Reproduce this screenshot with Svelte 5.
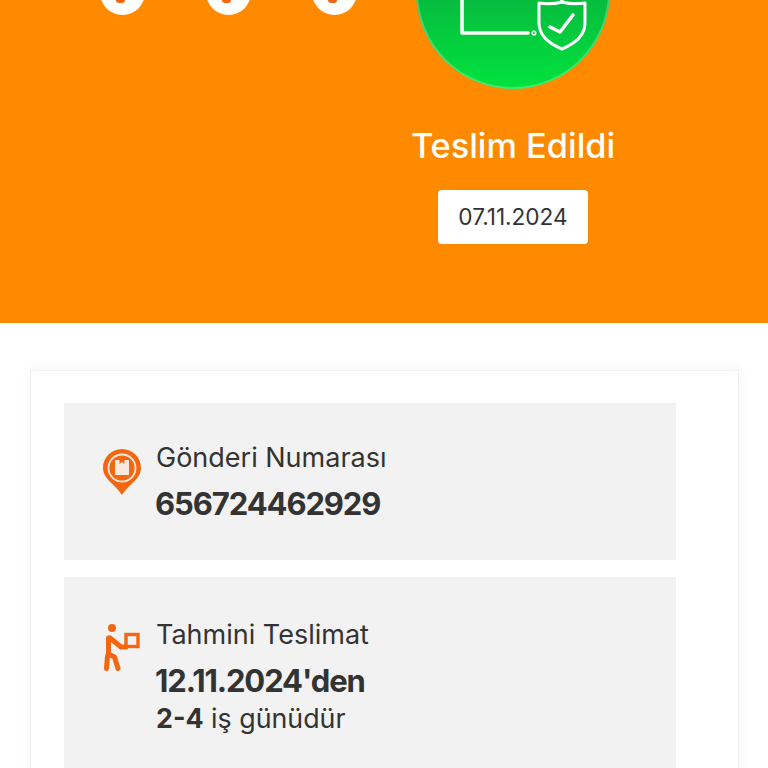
<script>
	const steps = [0, 1, 2];
	const rows = [
		{ label: 'Gönderi Numarası', value: '656724462929', icon: 'pin' },
		{ label: 'Tahmini Teslimat', value: "12.11.2024'den", icon: 'courier', note: 'iş günüdür', noteStrong: '2-4' }
	];
</script>

<main class="page">
	<section class="hero">
		<div class="steps">
			{#each steps as step (step)}
				<span class="step"><i class="step__mark"></i></span>
			{/each}
		</div>
		<div class="status">
			<div class="status__badge">
				<svg viewBox="0 0 194 194" width="194" height="194" fill="none" stroke="#fff" stroke-width="3.500" stroke-linecap="round" stroke-linejoin="round">
					<path d="M46 40v98h66" />
					<path d="M46 40h100v67" />
					<circle cx="118" cy="138" r="0.800" />
					<path d="M123 108q12 2 23 -1q11 3 23 1v20c0 13-11 21-23 26c-12-5-23-13-23-26z" stroke-width="3" />
					<path d="M134 132l10 5l13-17" />
				</svg>
			</div>
			<h1>Teslim Edildi</h1>
			<p class="status__date">07.11.2024</p>
		</div>
	</section>

	<section class="card">
		{#each rows as row (row.label)}
			<div class="row" class:row--tall={row.note}>
				<div class="row__icon">
					{#if row.icon === 'pin'}
						<svg viewBox="0 0 38 46" width="38" height="46">
							<path d="M19 0C8.500 0 0 8.300 0 19C0 30 12 35 19 46C26 35 38 30 38 19C38 8.300 29.500 0 19 0z" fill="#f4660f" />
							<circle cx="19" cy="19" r="13.500" fill="none" stroke="#f6e9df" stroke-width="1.800" />
							<path d="M12 11h4.500v4l2.500-2l2.500 2v-4h4.500v15h-14z" fill="#f6e9df" />
						</svg>
					{:else}
						<svg viewBox="0 0 36 47" width="36" height="47" fill="none" stroke="#f4660f" stroke-width="5" stroke-linecap="round" stroke-linejoin="round">
							<circle cx="8" cy="4" r="4" fill="#f4660f" stroke="none" />
							<path d="M6 14l11 9h5" />
							<path d="M4.500 14v16l6 3l3.500 11.500" />
							<path d="M3.500 32l-1 12.500" />
							<rect x="22" y="10.500" width="12" height="12" stroke-width="3.400" stroke-linecap="butt" stroke-linejoin="miter" />
						</svg>
					{/if}
				</div>
				<div class="row__text">
					<p class="row__label">{row.label}</p>
					<p class="row__value">{row.value}</p>
					{#if row.note}
						<p class="row__note"><strong>{row.noteStrong}</strong> {row.note}</p>
					{/if}
				</div>
			</div>
		{/each}
	</section>
</main>

<style>
	:global(body) {
		background: #fff;
	}

	.page {
		height: 768px;
		overflow: hidden;
		font-family: Inter, 'Noto Sans', sans-serif;
		color: #333;
	}

	.hero {
		display: flex;
		justify-content: space-between;
		height: 428px;
		margin-top: -105px;
		padding: 0 158px 0 100px;
		box-sizing: border-box;
		background: #ff8a00;
	}

	.steps {
		display: flex;
		gap: 61px;
		padding-top: 75px;
	}

	.step {
		position: relative;
		width: 45px;
		height: 45px;
		border-radius: 50%;
		background: #fff;
	}

	.step__mark {
		position: absolute;
		left: 16px;
		top: 30px;
		width: 9px;
		height: 3px;
		border-radius: 0 0 5px 5px;
		background: #f4660f;
	}

	.status {
		display: flex;
		flex-direction: column;
		align-items: center;
		width: 194px;
	}

	.status__badge {
		width: 194px;
		height: 194px;
		border-radius: 50%;
		background: linear-gradient(#0d8f3f, #00e33d);
		box-shadow: 0 0 0 2px rgba(255, 255, 255, 0.25) inset;
		flex: none;
	}

	.status h1 {
		margin: 37px 0 0;
		font-size: 34.300px;
		line-height: 40px;
		font-weight: 500;
		color: #fff;
		white-space: nowrap;
	}

	.status__date {
		margin: 24px 0 0;
		padding: 0 20px;
		height: 54px;
		line-height: 53px;
		font-size: 22.600px;
		background: #fff;
		border-radius: 4px;
		white-space: nowrap;
	}

	.card {
		display: flex;
		flex-direction: column;
		gap: 17px;
		width: 709px;
		box-sizing: border-box;
		margin: 47px 0 0 30px;
		padding: 32px 62px 32px 33px;
		background: #fff;
		border: 1px solid #f0f0f0;
		box-shadow: 0 0 12px rgba(0, 0, 0, 0.05);
	}

	.row {
		display: flex;
		align-items: center;
		gap: 15px;
		height: 157px;
		padding: 0 39px;
		background: #f2f2f2;
	}

	.row--tall {
		height: 200px;
		align-items: flex-start;
		padding-top: 42px;
		box-sizing: border-box;
	}

	.row__icon {
		display: flex;
		flex: none;
		width: 38px;
		margin-bottom: 20px;
	}

	.row--tall .row__icon {
		margin: 5px 0 0;
		padding-left: 1px;
		box-sizing: border-box;
	}

	.row__label,
	.row__value,
	.row__note {
		margin: 0;
	}

	.row__label {
		font-size: 27px;
		line-height: 32px;
	}

	.row__value {
		margin: 12px 0 0 -1px;
		font-size: 31px;
		line-height: 36px;
		font-weight: 700;
		letter-spacing: -1.100px;
	}

	.row__note {
		margin-top: 1px;
		font-size: 26.800px;
		line-height: 36px;
	}
</style>
